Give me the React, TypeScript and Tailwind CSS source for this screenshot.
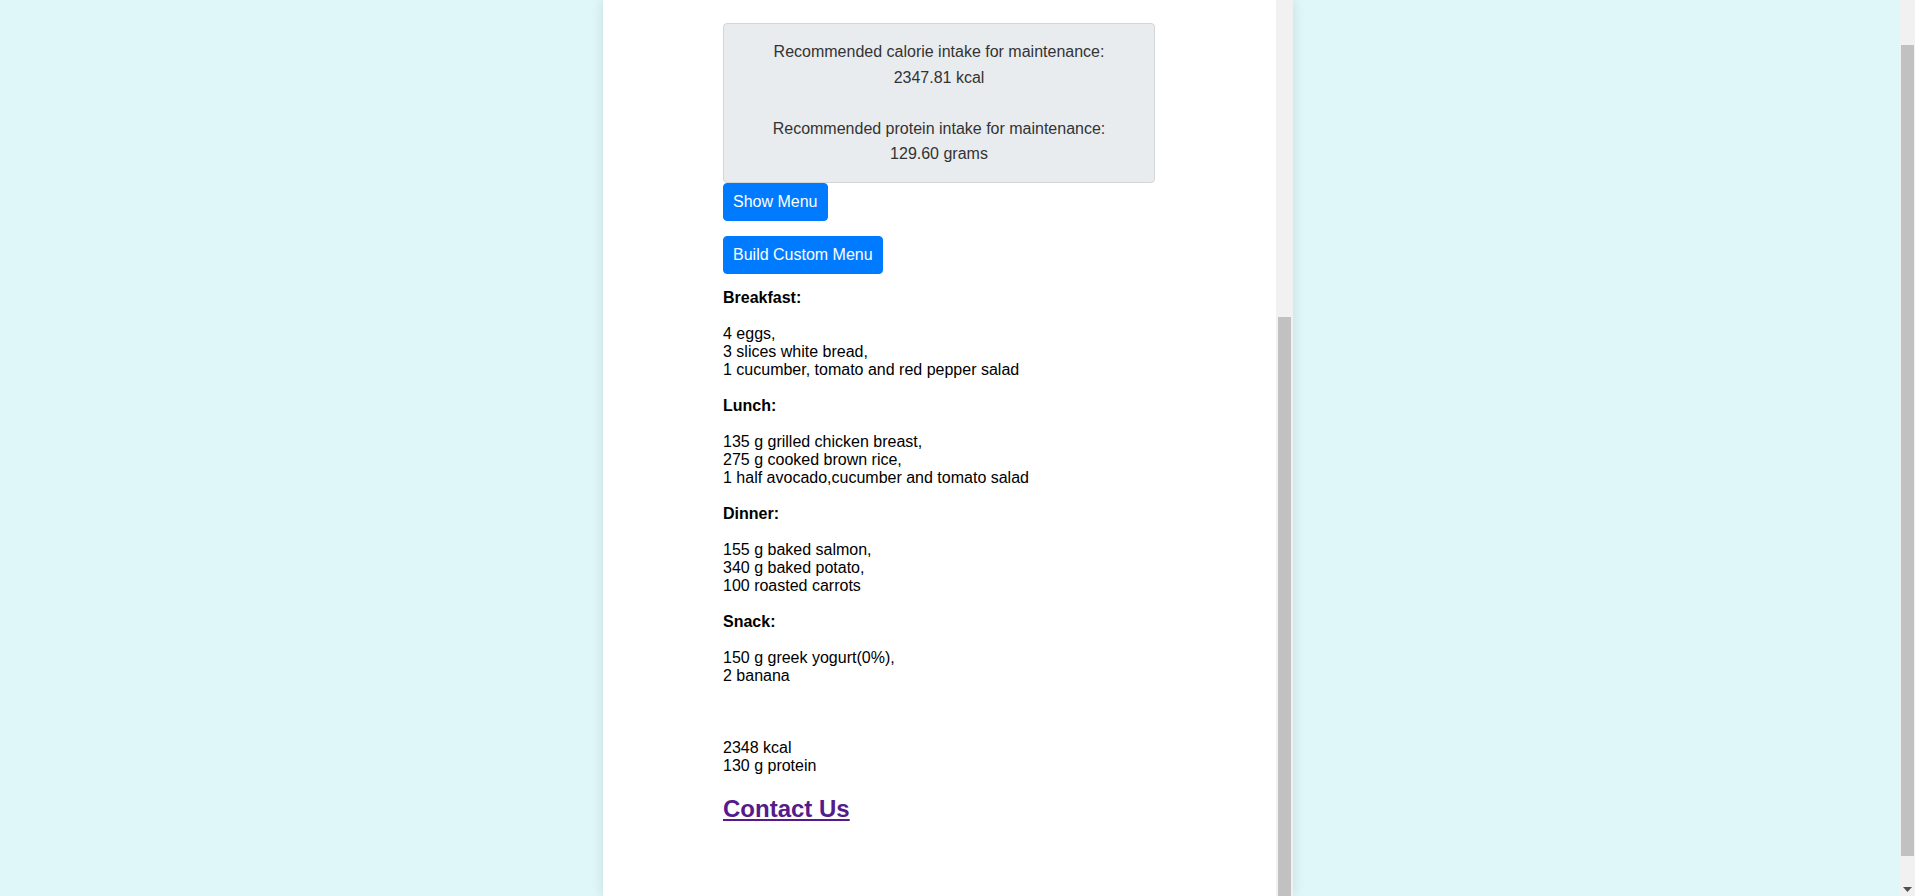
import React from "react";

/* =====================================================
   DATA
===================================================== */
const meals = [
  {
    title: "Breakfast:",
    items: ["4 eggs,", "3 slices white bread,", "1 cucumber, tomato and red pepper salad"],
  },
  {
    title: "Lunch:",
    items: ["135 g grilled chicken breast,", "275 g cooked brown rice,", "1 half avocado,cucumber and tomato salad"],
  },
  {
    title: "Dinner:",
    items: ["155 g baked salmon,", "340 g baked potato,", "100 roasted carrots"],
  },
  {
    title: "Snack:",
    items: ["150 g greek yogurt(0%),", "2 banana"],
  },
];

/* =====================================================
   SMALL COMPONENTS
===================================================== */
const Button = ({ label }: { label: string }) => (
  <button className="self-start rounded-[4px] border border-[#007bff] bg-[#007bff] px-[9px] py-[6px] text-base leading-6 text-white">
    {label}
  </button>
);

const Meal = ({ meal }: { meal: (typeof meals)[0] }) => (
  <div className="mb-[18px]">
    <p className="mb-[18px] font-bold">{meal.title}</p>
    {meal.items.map((it, i) => (
      <p key={i}>{it}</p>
    ))}
  </div>
);

// fake scrollbar track + thumb
const PanelScrollbar = () => (
  <div className="flex w-[17px] flex-col bg-[#f1f1f1] px-[2px] pt-[317px]">
    <div className="flex-1 bg-[#c1c1c1]" />
  </div>
);

const PageScrollbar = () => (
  <div className="flex h-full w-[16px] flex-col bg-[#f1f1f1] pl-[2px] pr-[1px]">
    <div className="h-[45px]" />
    <div className="h-[811px] bg-[#c1c1c1]" />
    <div className="flex flex-1 items-end justify-center pb-[3px]">
      <svg width="9" height="6" viewBox="0 0 9 6">
        <polygon points="0,0 9,0 4.5,5" fill="#505050" />
      </svg>
    </div>
  </div>
);

/* =====================================================
   MAIN COMPONENT
===================================================== */
export default function App() {
  return (
    <div
      className="flex h-[896px] w-full overflow-hidden bg-[#e0f7fa]"
      style={{ fontFamily: '"Liberation Sans", Arial, sans-serif' }}
    >
      <div className="min-w-0 flex-1">
        <div className="ml-[603px] flex h-full w-[690px] bg-white shadow-[0_0_12px_rgba(0,0,0,0.12)]">
          <div className="flex flex-1 flex-col pl-[120px] pt-[23px]">
            {/* recommendation box */}
            <div className="w-[432px] rounded-[4px] border border-[#d3d6d9] bg-[#e9ecef] py-[15px] text-center text-base leading-[25.6px] text-[#333]">
              <p>Recommended calorie intake for maintenance:</p>
              <p>2347.81 kcal</p>
              <p className="mt-[25.6px]">Recommended protein intake for maintenance:</p>
              <p>129.60 grams</p>
            </div>

            <div className="flex flex-col">
              <Button label="Show Menu" />
              <div className="h-[15px]" />
              <Button label="Build Custom Menu" />
            </div>

            {/* menu */}
            <div className="mt-[15px] text-base leading-[18px] text-black">
              {meals.map((m, i) => (
                <Meal key={i} meal={m} />
              ))}
              {/* margin collapses with the last meal's mb-[18px] */}
              <div className="mt-[54px]">
                <p>2348 kcal</p>
                <p>130 g protein</p>
              </div>
            </div>

            <a href="#" className="mt-[20px] self-start text-[24px] font-bold leading-[27px] text-[#551a8b] underline">
              Contact Us
            </a>
          </div>
          <PanelScrollbar />
        </div>
      </div>
      <PageScrollbar />
    </div>
  );
}
